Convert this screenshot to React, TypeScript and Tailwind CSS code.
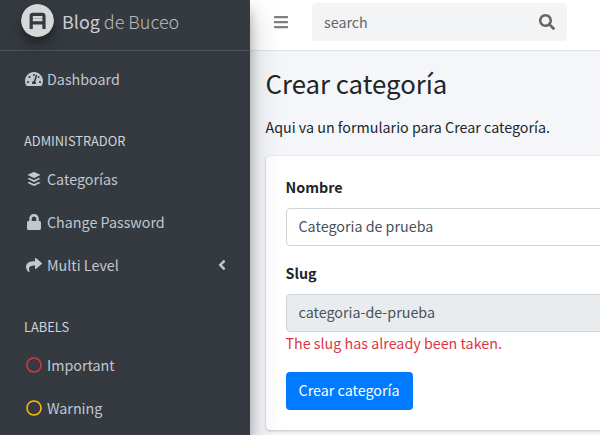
import type { ReactNode } from "react";
import { FaAngleLeft, FaBars, FaBuffer, FaLock, FaRegCircle, FaSearch, FaShare, FaTachometerAlt } from "react-icons/fa";

function NavItem({ icon, label, trailing }: { icon: ReactNode; label: string; trailing?: ReactNode }) {
  return (
    <a className="mb-[3.2px] flex h-10 items-center pr-3 pl-4 text-[#c2c7d0]">
      <span className="mr-[3px] flex w-5 shrink-0 justify-center text-[16px]">{icon}</span>
      <span className="grow">{label}</span>
      {trailing}
    </a>
  );
}

function NavHeader({ children }: { children: ReactNode }) {
  return <div className="h-[56.8px] px-4 pt-[27.6px] text-[12.85px] leading-[21.6px] text-[#d0d4db]">{children}</div>;
}

function Logo() {
  return (
    <svg viewBox="0 0 33 33" className="h-[33px] w-[33px] shrink-0 rounded-full shadow-[0_10px_20px_rgba(0,0,0,.19),0_6px_6px_rgba(0,0,0,.23)]">
      <circle cx="16.5" cy="16.5" r="16.5" fill="#d6d7d8" />
      <path d="M10.2 25V12.2Q10.2 10.4 12 10.4H21.2Q23 10.4 23 12.2V25M10.2 18.8H23" fill="none" stroke="#343a40" strokeWidth="3.2" />
      <path d="M11.5 14.4H21.5" stroke="#343a40" strokeOpacity=".35" strokeWidth="0.8" />
    </svg>
  );
}

export default function App() {
  return (
    <div className="flex h-[435px] w-[600px] overflow-hidden bg-[#f4f6f9] font-['Noto_Sans_CJK_JP','Noto_Sans_CJK_SC',sans-serif] text-[14.3px] leading-6 text-[#212529]">
      <aside className="z-10 h-full w-[250px] shrink-0 bg-[#343a40] shadow-[0_14px_28px_rgba(0,0,0,.25),0_10px_10px_rgba(0,0,0,.22)]">
        <a className="flex h-[51px] items-start gap-2 border-b border-[#4b545c] pt-1 pl-[21px] text-[#b9bbbe]">
          <Logo />
          <span className="pt-[2px] text-[17.95px] leading-[30px] font-light"><span className="font-normal text-[#cccecf]">Blog</span> de Buceo</span>
        </a>
        <nav className="px-2 pt-[7.8px]">
          <NavItem icon={<FaTachometerAlt className="h-4 w-[18px]" />} label="Dashboard" />
          <NavHeader>ADMINISTRADOR</NavHeader>
          <NavItem icon={<FaBuffer />} label="Categorías" />
          <NavItem icon={<FaLock />} label="Change Password" />
          <NavItem icon={<FaShare />} label="Multi Level" trailing={<FaAngleLeft className="text-[16px]" />} />
          <NavHeader>LABELS</NavHeader>
          <NavItem icon={<FaRegCircle className="text-[#dc3545]" />} label="Important" />
          <NavItem icon={<FaRegCircle className="text-[#ffc107]" />} label="Warning" />
        </nav>
      </aside>
      <div className="w-[350px] shrink-0">
        <header className="flex h-[51px] items-start border-b border-[#dee2e6] bg-white pt-[3px] pl-6">
          <FaBars className="mt-[11px] mr-6 h-4 w-[14px] text-[#808080]" />
          <div className="flex h-[38px] w-[255px] items-center justify-between rounded bg-[#f2f4f6] px-3 text-[#666]">
            <span>search</span>
            <FaSearch className="text-[16px]" />
          </div>
        </header>
        <main className="w-[500px] pt-[15px] pl-[15.5px]">
          <h1 className="text-[25.75px] leading-[34px]">Crear categoría</h1>
          <p className="mt-[15px]">Aqui va un formulario para Crear categoría.</p>
          <section className="mt-[17px] h-[274px] rounded bg-white px-5 pt-[19px] shadow-[0_0_1px_rgba(0,0,0,.125),0_1px_3px_rgba(0,0,0,.2)]">
            <div className="mb-[9px] font-bold">Nombre</div>
            <div className="flex h-[38px] items-center rounded border border-[#ced4da] px-3 pb-[2px] text-[#495057]">Categoria de prueba</div>
            <div className="mt-[15px] mb-[9px] font-bold">Slug</div>
            <div className="flex h-[38px] items-center rounded border border-[#ced4da] bg-[#e9ecef] px-3 pb-[2px] text-[#495057]">categoria-de-prueba</div>
            <div className="-mt-px text-[#dc3545]">The slug has already been taken.</div>
            <button className="mt-[17px] h-[38px] w-[127px] rounded bg-[#007bff] pb-[2px] text-white">Crear categoría</button>
          </section>
        </main>
      </div>
    </div>
  );
}
